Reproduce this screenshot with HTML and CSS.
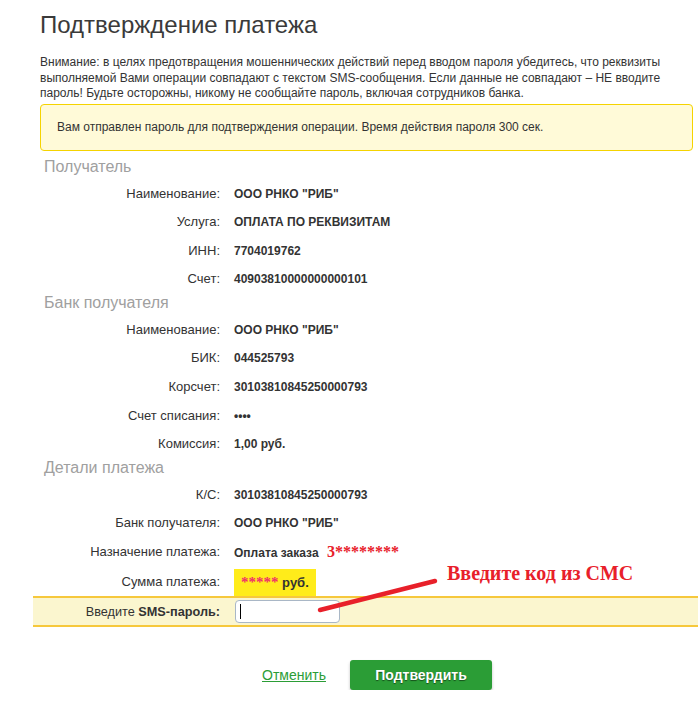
FILE: index.html
```html
<!DOCTYPE html>
<html lang="ru">
<head>
	<meta charset="UTF-8">
	<title>Подтверждение платежа</title>
	<link rel="stylesheet" href="styles.css">
</head>
<body>
	<main class="page">
		<h1 class="page-title">Подтверждение платежа</h1>
		<p class="warning">Внимание: в целях предотвращения мошеннических действий перед вводом пароля убедитесь, что реквизиты выполняемой Вами операции совпадают с текстом SMS-сообщения. Если данные не совпадают – НЕ вводите пароль! Будьте осторожны, никому не сообщайте пароль, включая сотрудников банка.</p>

		<div class="notice">Вам отправлен пароль для подтверждения операции. Время действия пароля 300 сек.</div>

		<section class="group">
			<h2 class="group-title">Получатель</h2>
			<dl class="fields">
				<dt>Наименование:</dt><dd>ООО РНКО "РИБ"</dd>
				<dt>Услуга:</dt><dd>ОПЛАТА ПО РЕКВИЗИТАМ</dd>
				<dt>ИНН:</dt><dd>7704019762</dd>
				<dt>Счет:</dt><dd>40903810000000000101</dd>
			</dl>
		</section>

		<section class="group">
			<h2 class="group-title">Банк получателя</h2>
			<dl class="fields">
				<dt>Наименование:</dt><dd>ООО РНКО "РИБ"</dd>
				<dt>БИК:</dt><dd>044525793</dd>
				<dt>Корсчет:</dt><dd>30103810845250000793</dd>
				<dt>Счет списания:</dt><dd>••••</dd>
				<dt>Комиссия:</dt><dd>1,00 руб.</dd>
			</dl>
		</section>

		<section class="group">
			<h2 class="group-title">Детали платежа</h2>
			<dl class="fields">
				<dt>К/С:</dt><dd>30103810845250000793</dd>
				<dt>Банк получателя:</dt><dd>ООО РНКО "РИБ"</dd>
				<dt>Назначение платежа:</dt><dd>Оплата заказа <span class="mark">3********</span></dd>
				<dt>Сумма платежа:</dt><dd><span class="amount"><span class="stars">*****</span> руб.</span></dd>
			</dl>
		</section>

		<div class="sms-row">
			<label class="sms-label" for="sms">Введите <b>SMS-пароль:</b></label>
			<span class="sms-field">
				<input id="sms" class="sms-input" type="text">
			</span>
			<!-- annotation drawn over the screenshot -->
			<span class="hint">Введите код из СМС</span>
			<svg class="hint-arrow" width="125" height="37" viewBox="0 0 125 37">
				<line x1="3" y1="33" x2="118" y2="4" stroke="#e8202a" stroke-width="4.5" stroke-linecap="round"/>
			</svg>
		</div>

		<div class="actions">
			<a href="#" class="cancel-link">Отменить</a>
			<button class="confirm-btn">Подтвердить</button>
		</div>
	</main>
</body>
</html>
```

FILE: styles.css
```css
/* Base styles */
:root {
	--color-text: #333;
	--color-muted: #a0a0a0;
	--color-green: #2b9d36;
	--color-red: #e8202a;
}

body {
	margin: 0;
	font-family: "Liberation Sans", Arial, sans-serif;
	color: var(--color-text);
	background: #fff;
}

.page {
	padding: 0 5px 0 40px;
}

/* Header */
.page-title {
	margin: 0;
	padding-top: 9px;
	font-size: 24px;
	font-weight: normal;
	line-height: 32px;
	color: #3a3a3a;
}

.warning {
	margin: 14px 0 0;
	font-size: 12px;
	line-height: 15.5px;
	width: 655px;
}

/* Yellow notice */
.notice {
	margin-top: 2px;
	padding: 14px 16px 15px;
	border: 1px solid #f5d300;
	border-radius: 4px;
	background: #fffad8;
	font-size: 12px;
	line-height: 16px;
	width: 619px;
}

/* Field groups */
.group:first-of-type {
	margin-top: 7px;
}

.group-title {
	margin: 0 0 4px 4px;
	font-size: 16px;
	font-weight: normal;
	line-height: 18px;
	color: var(--color-muted);
}

.fields {
	display: grid;
	grid-template-columns: 180px 1fr;
	column-gap: 14px;
	margin: 0;
	font-size: 12px;
	line-height: 28.6px;
}

.fields dt {
	text-align: right;
	font-size: 13px;
}

.fields dd {
	margin: 0;
	font-weight: bold;
}

.mark {
	margin-left: 5px;
	font-family: "Liberation Serif", "Times New Roman", serif;
	font-size: 16px;
	color: var(--color-red);
}

.amount {
	display: inline-block;
	padding: 0 7px;
	line-height: 26px;
	background: #ffec1a;
	font-size: 13px;
	vertical-align: middle;
}

.stars {
	font-family: "Liberation Serif", "Times New Roman", serif;
	font-size: 15px;
	color: #f0306a;
}

/* SMS input row */
.sms-row {
	position: relative;
	display: grid;
	grid-template-columns: 180px 1fr;
	column-gap: 15px;
	align-items: center;
	margin: 0 -5px 0 -7px;
	padding: 2px 0 2px 7px;
	height: 23px;
	background: #fbf6cf;
	border-top: 2px solid #f6c83c;
	border-bottom: 2px solid #f6c83c;
	font-size: 12.7px;
}

.sms-label {
	text-align: right;
}

.sms-field {
	position: relative;
	display: block;
	width: 105px;
	height: 23px;
}

.sms-input {
	box-sizing: border-box;
	width: 105px;
	height: 23px;
	margin: 0;
	border: 1px solid #a9b7c6;
	border-radius: 4px;
	background: #fff;
	outline: none;
}

/* fake caret */
.sms-field::after {
	content: "";
	position: absolute;
	left: 5px;
	top: 4px;
	width: 1px;
	height: 15px;
	background: #000;
}

.hint {
	position: absolute;
	left: 414px;
	top: -36px;
	font-family: "Liberation Serif", "Times New Roman", serif;
	font-size: 20px;
	font-weight: bold;
	color: var(--color-red);
	white-space: nowrap;
}

.hint-arrow {
	position: absolute;
	left: 284px;
	top: -21px;
}

/* Actions */
.actions {
	display: flex;
	align-items: center;
	gap: 24px;
	margin-top: 33px;
	padding-left: 222px;
}

.cancel-link {
	font-size: 14px;
	color: var(--color-green);
	text-decoration: underline;
}

.confirm-btn {
	width: 142px;
	height: 30px;
	border: none;
	border-radius: 3px;
	background: var(--color-green);
	color: #fff;
	font-family: inherit;
	font-size: 14px;
	font-weight: bold;
	text-shadow: 0 1px 1px rgba(0, 0, 0, 0.5);
	box-shadow: 0 2px 3px rgba(0, 0, 0, 0.25);
	cursor: pointer;
}
```
